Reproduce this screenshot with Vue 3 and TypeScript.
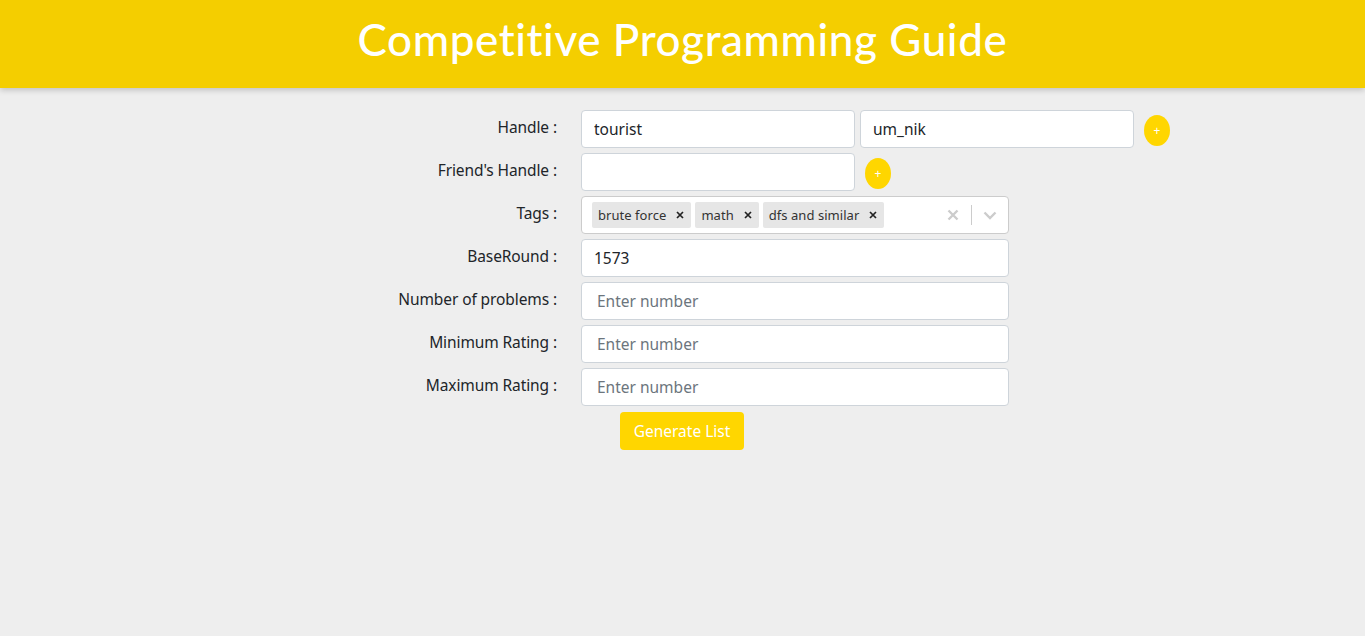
<template>
  <div class="page">
    <header class="header">
      <h1>Competitive Programming Guide</h1>
    </header>
    <form class="form" @submit.prevent>
      <div class="row">
        <label class="row__label">Handle :</label>
        <input class="field field--half" type="text" v-model="handles[0]">
        <input class="field field--half" type="text" v-model="handles[1]">
        <button class="add" type="button">+</button>
      </div>
      <div class="row">
        <label class="row__label">Friend's Handle :</label>
        <input class="field field--half" type="text" v-model="friend">
        <button class="add" type="button">+</button>
      </div>
      <div class="row">
        <label class="row__label">Tags :</label>
        <div class="select">
          <div class="select__tags">
            <span class="tag" v-for="tag in tags" :key="tag">
              <span class="tag__text">{{ tag }}</span>
              <svg class="tag__x" viewBox="0 0 8 8" width="8" height="8">
                <path d="M1 1 7 7M7 1 1 7" stroke="#222" stroke-width="1.7" fill="none" />
              </svg>
            </span>
          </div>
          <svg class="select__clear" viewBox="0 0 12 12" width="12" height="12">
            <path d="M1.5 1.5 10.5 10.5M10.5 1.5 1.5 10.5" stroke="#ccc" stroke-width="2.4" fill="none" />
          </svg>
          <span class="select__sep"></span>
          <svg class="select__chevron" viewBox="0 0 14 9" width="14" height="9">
            <path d="M1.5 1.5 7 7 12.5 1.5" stroke="#ccc" stroke-width="2.4" fill="none" />
          </svg>
        </div>
      </div>
      <div class="row">
        <label class="row__label">BaseRound :</label>
        <input class="field field--wide" type="text" v-model="baseRound">
      </div>
      <div class="row" v-for="label in numberFields" :key="label">
        <label class="row__label">{{ label }} :</label>
        <input class="field field--wide field--number" type="text" placeholder="Enter number">
      </div>
      <div class="actions">
        <button class="submit" type="button">Generate List</button>
      </div>
    </form>
  </div>
</template>

<script setup lang="ts">
import { ref } from "vue";

const handles = ref<string[]>(["tourist", "um_nik"]);
const friend = ref<string>("");
const baseRound = ref<string>("1573");
const tags: string[] = ["brute force", "math", "dfs and similar"];
const numberFields: string[] = ["Number of problems", "Minimum Rating", "Maximum Rating"];
</script>

<style>
html,
body {
  margin: 0;
  background: #eeeeee;
}
</style>

<style scoped>
.page {
  min-height: 636px;
  background: #eeeeee;
  font-family: "Noto Sans", "Open Sans", sans-serif;
  font-size: 16px;
  color: #212529;
}

.header {
  height: 88px;
  background: #f4ce00;
  box-shadow: 0 2px 6px rgba(0, 0, 0, 0.2);
  display: flex;
  align-items: center;
  justify-content: center;
}

.header h1 {
  margin: 0;
  color: #fff;
  font-family: "Lato", sans-serif;
  font-size: 44px;
  font-weight: 500;
  line-height: 1;
  letter-spacing: 0.6px;
  padding-bottom: 11px;
}

.form {
  padding-top: 22px;
  display: flex;
  flex-direction: column;
  gap: 5px;
}

.row {
  display: flex;
  align-items: flex-start;
  height: 38px;
}

.row__label {
  box-sizing: border-box;
  flex: 0 0 581px;
  padding-right: 24px;
  text-align: right;
  font-size: 15.5px;
  line-height: 34px;
  letter-spacing: -0.1px;
}

.field {
  box-sizing: border-box;
  height: 38px;
  border: 1px solid #ced4da;
  border-radius: 4px;
  background: #fff;
  padding: 0 12px;
  font: inherit;
  font-size: 15.5px;
  color: #212529;
  outline: 0;
}

.field--half {
  width: 274px;
  margin-right: 5px;
}

.field--wide {
  width: 428px;
}

.field--number {
  padding-left: 15px;
}

.field::placeholder {
  color: #6c757d;
  opacity: 1;
}

.add {
  box-sizing: border-box;
  width: 26px;
  height: 31px;
  margin: 5px 0 0 5px;
  padding: 0;
  border: 0;
  border-radius: 50%;
  background: #ffd600;
  color: #fff;
  font-family: inherit;
  font-size: 12px;
  line-height: 31px;
}

.select {
  box-sizing: border-box;
  width: 428px;
  height: 38px;
  border: 1px solid #cccccc;
  border-radius: 4px;
  background: #fff;
  display: flex;
  align-items: center;
}

.select__tags {
  flex: 1;
  display: flex;
  gap: 4px;
  padding-left: 10px;
}

.tag {
  height: 26px;
  box-sizing: border-box;
  background: #e6e6e6;
  border-radius: 2px;
  display: flex;
  align-items: center;
  padding: 0 7px 0 6px;
  font-size: 13px;
  letter-spacing: 0.05px;
  color: #333;
}

.tag__text {
  margin-right: 10px;
}

.select__clear {
  margin-right: 12px;
}

.select__sep {
  width: 1px;
  height: 20px;
  background: #ccc;
  margin-right: 11px;
}

.select__chevron {
  margin-right: 11px;
}

.actions {
  padding: 1px 0 0 620px;
}

.submit {
  box-sizing: border-box;
  width: 124px;
  height: 38px;
  border: 0;
  border-radius: 4px;
  background: #ffd600;
  color: #fff;
  font-family: inherit;
  font-size: 15.5px;
  padding: 0;
}
</style>
